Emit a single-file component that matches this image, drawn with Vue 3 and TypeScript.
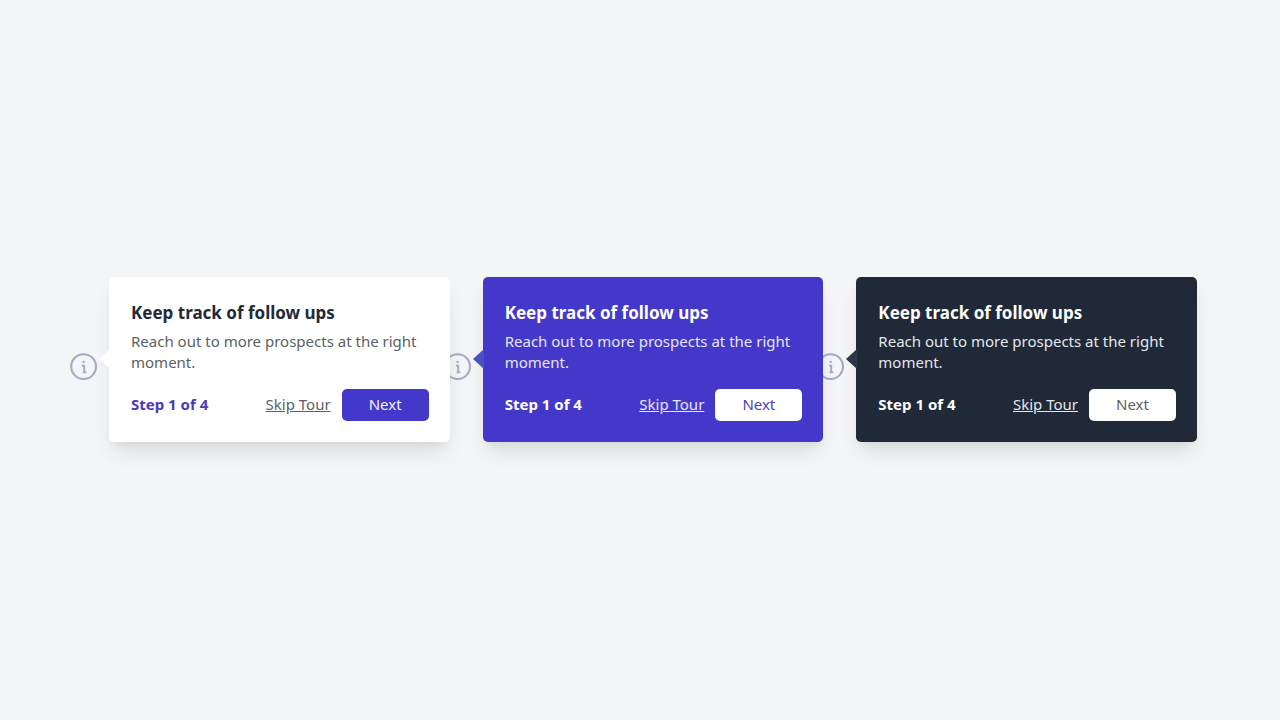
<script setup lang="ts">
interface TourCard {
  theme: 'light' | 'indigo' | 'dark'
  title: string
  text: string
  step: number
  total: number
}

const title = 'Keep track of follow ups'
const text = 'Reach out to more prospects at the right moment.'

const cards: TourCard[] = [
  { theme: 'light', title, text, step: 1, total: 4 },
  { theme: 'indigo', title, text, step: 1, total: 4 },
  { theme: 'dark', title, text, step: 1, total: 4 },
]
</script>

<template>
  <main class="page">
    <section v-for="card in cards" :key="card.theme" class="item" :class="card.theme">
      <svg class="info" viewBox="0 0 28 28" fill="none" aria-hidden="true">
        <circle cx="13.6" cy="13.6" r="12.4" stroke="#a5acc2" stroke-width="2.1" />
        <circle cx="13.6" cy="8.9" r="1.2" fill="#a5acc2" />
        <path d="M12 12.8h2.2V19.2M12.6 19.4h3.8" stroke="#a5acc2" stroke-width="1.9" />
      </svg>
      <div class="card">
        <svg class="arrow" viewBox="0 0 11 20" aria-hidden="true">
          <path d="M0 10L11 0V20Z" />
        </svg>
        <h2>{{ card.title }}</h2>
        <p>{{ card.text }}</p>
        <footer>
          <span class="step">Step {{ card.step }} of {{ card.total }}</span>
          <a href="#">Skip Tour</a>
          <button type="button">Next</button>
        </footer>
      </div>
    </section>
  </main>
</template>

<style>
body {
  margin: 0;
  background: #f3f5f7;
}
</style>

<style scoped>
.page {
  box-sizing: border-box;
  min-height: 100vh;
  display: flex;
  align-items: center;
  padding: 0 83px 2px 70px;
  font-family: "Noto Sans", sans-serif;
  font-size: 15px;
  line-height: 21px;
}
.item {
  flex: 1;
  display: flex;
  align-items: center;
  gap: 11px;
}
.item + .item {
  margin-left: -6px;
}
.info {
  flex: none;
  width: 28px;
  height: 28px;
  margin-top: 16px;
}
.card {
  position: relative;
  z-index: 1;
  flex: 1;
  padding: 21px 21px 21px 22px;
  border-radius: 5px;
  background: var(--surface);
  box-shadow: 0 13px 20px -4px rgba(0, 0, 0, 0.1), 0 5px 8px -3px rgba(0, 0, 0, 0.05);
}
.arrow {
  position: absolute;
  left: -10px;
  top: 50%;
  width: 11px;
  height: 20px;
  transform: translateY(-50%);
  fill: var(--arrow);
}
h2 {
  margin: 0 0 3px;
  font-size: 17px;
  line-height: 30px;
  font-weight: 700;
  color: var(--title);
}
p {
  margin: 0 0 16px;
  color: var(--text);
}
footer {
  display: flex;
  align-items: center;
}
.step {
  flex: 1;
  font-weight: 700;
  color: var(--step);
}
a {
  color: var(--text);
  text-decoration: underline;
}
button {
  width: 87px;
  height: 32px;
  margin-left: 11px;
  padding: 0;
  border: 0;
  border-radius: 5px;
  font: inherit;
  background: var(--button);
  color: var(--button-text);
  cursor: pointer;
}
.light {
  --surface: #ffffff;
  --arrow: #ffffff;
  --title: #232936;
  --text: #5b5f66;
  --step: #4c3bb5;
  --button: #4338ca;
  --button-text: #f3f2fc;
}
.indigo {
  --surface: #4338ca;
  --arrow: #4c51bf;
  --title: #ffffff;
  --text: #e7e6f8;
  --step: #ffffff;
  --button: #ffffff;
  --button-text: #4c41b4;
}
.dark {
  --surface: #1f2937;
  --arrow: #2d3748;
  --title: #ffffff;
  --text: #e5e7eb;
  --step: #ffffff;
  --button: #ffffff;
  --button-text: #5b5f66;
}
</style>
